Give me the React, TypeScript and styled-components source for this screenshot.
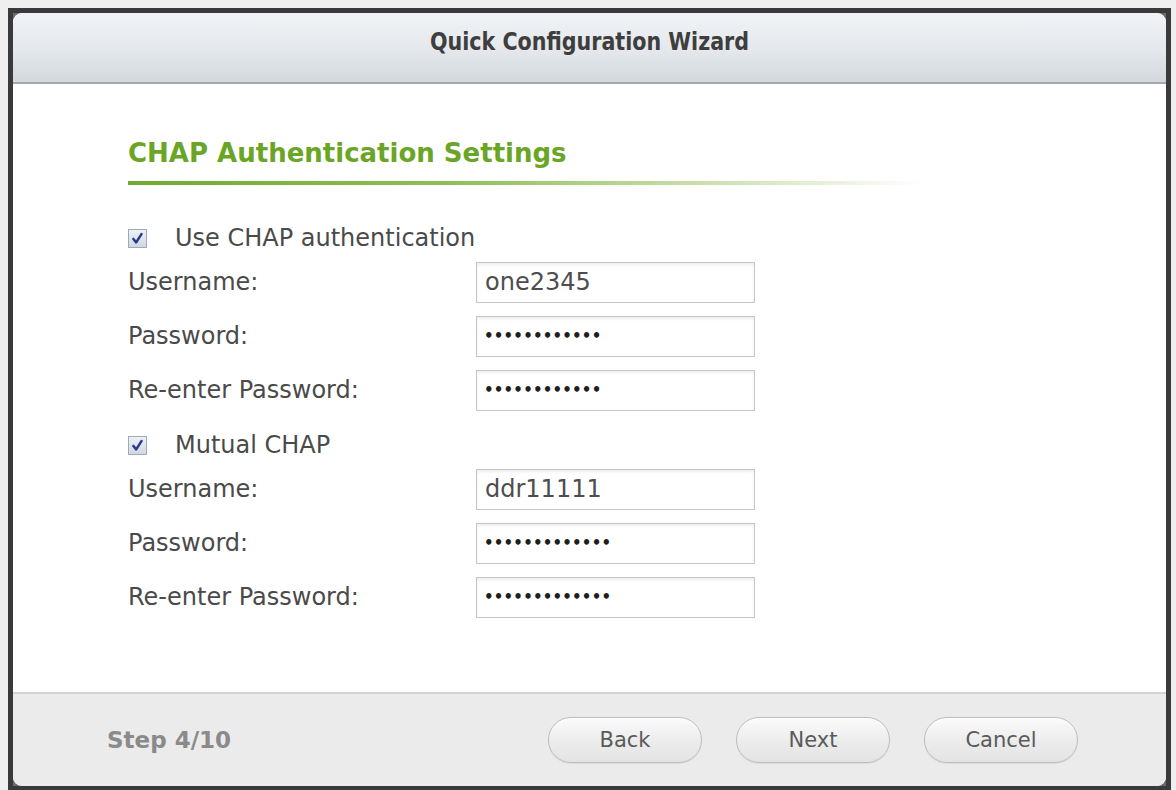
import React from 'react';
import styled, { createGlobalStyle } from 'styled-components';

interface Field {
  label: string;
  value: string;
  masked?: boolean;
}

interface Section {
  title: string;
  fields: Field[];
}

const sections: Section[] = [
  {
    title: 'Use CHAP authentication',
    fields: [
      { label: 'Username:', value: 'one2345' },
      { label: 'Password:', value: '••••••••••••', masked: true },
      { label: 'Re-enter Password:', value: '••••••••••••', masked: true },
    ],
  },
  {
    title: 'Mutual CHAP',
    fields: [
      { label: 'Username:', value: 'ddr11111' },
      { label: 'Password:', value: '•••••••••••••', masked: true },
      { label: 'Re-enter Password:', value: '•••••••••••••', masked: true },
    ],
  },
];

const GlobalStyle = createGlobalStyle`
  html, body {
    margin: 0;
    padding: 0;
    background: #efefef;
  }
  body {
    padding: 8px 5px 0 8px;
    font-family: "DejaVu Sans", Verdana, sans-serif;
  }
`;

const Window = styled.div`
  box-sizing: border-box;
  width: 1163px;
  height: 782px;
  border: 5px solid #3a3a3a;
  border-bottom-width: 4px;
  background: #6b6b6b;
`;

const Panel = styled.div`
  height: 100%;
  display: flex;
  flex-direction: column;
  border-radius: 9px;
  overflow: hidden;
  background: #ffffff;
`;

const TitleBar = styled.div`
  box-sizing: border-box;
  height: 71px;
  flex: none;
  display: flex;
  align-items: center;
  justify-content: center;
  background: linear-gradient(#f1f3f6, #e4e8ec 55%, #d3d8dd);
  border-bottom: 2px solid #a3a8ad;
  padding-bottom: 12px;
`;

/* narrow face is not installed, so the bold sans is squeezed */
const TitleText = styled.span`
  display: inline-block;
  transform: scaleX(0.86);
  font-weight: bold;
  font-size: 24px;
  color: #3e3e3e;
`;

const Body = styled.div`
  flex: 1;
  padding: 53px 0 0 115px;
`;

const Heading = styled.h2`
  margin: 0;
  font-size: 26px;
  line-height: 32px;
  font-weight: bold;
  color: #6aa526;
`;

const Rule = styled.div`
  width: 795px;
  height: 4px;
  margin-top: 12px;
  background: linear-gradient(90deg, #6fab2c 0%, #8fbe56 40%, #c4dda5 70%, rgba(255, 255, 255, 0) 100%);
`;

const Form = styled.div`
  margin-top: 37px;
  display: flex;
  flex-direction: column;
  gap: 19px;
`;

const Group = styled.div`
  display: flex;
  flex-direction: column;
`;

const CheckRow = styled.label`
  height: 32px;
  margin-bottom: 8px;
  display: flex;
  align-items: center;
  gap: 28px;
  font-size: 24px;
  color: #4a4a4a;
`;

const CheckBox = styled.span`
  box-sizing: border-box;
  width: 19px;
  height: 19px;
  display: flex;
  align-items: center;
  justify-content: center;
  border: 1px solid #9eaab8;
  background: linear-gradient(#eef2f7, #cfd8e3);
`;

const FieldList = styled.div`
  display: flex;
  flex-direction: column;
  gap: 14px;
`;

const FieldRow = styled.div`
  height: 40px;
  display: flex;
  align-items: center;
`;

const Label = styled.span`
  width: 348px;
  font-size: 24px;
  color: #4a4a4a;
`;

const TextBox = styled.input<{ $masked?: boolean }>`
  box-sizing: border-box;
  width: 279px;
  height: 41px;
  margin: 0;
  padding: 0 0 0 ${(p) => (p.$masked ? '7px' : '8px')};
  border: 1px solid #c6c6c6;
  box-shadow: inset 0 2px 3px rgba(0, 0, 0, 0.07);
  background: #ffffff;
  outline: none;
  font-family: "DejaVu Sans", Verdana, sans-serif;
  font-weight: ${(p) => (p.$masked ? 'bold' : 'normal')};
  font-size: ${(p) => (p.$masked ? '15px' : '24px')};
  letter-spacing: ${(p) => (p.$masked ? '0.2px' : '0')};
  color: ${(p) => (p.$masked ? '#1e1e1e' : '#4d4d4d')};
`;

const Footer = styled.div`
  box-sizing: border-box;
  height: 94px;
  flex: none;
  display: flex;
  align-items: center;
  padding: 0 88px 0 94px;
  border-top: 2px solid #d2d2d2;
  background: #ebebeb;
`;

const Step = styled.span`
  flex: 1;
  font-weight: bold;
  font-size: 23px;
  color: #8a8a8a;
`;

const Buttons = styled.div`
  display: flex;
  gap: 34px;
`;

const Button = styled.button`
  box-sizing: border-box;
  width: 154px;
  height: 46px;
  border-radius: 23px;
  border: 1px solid #bcbcbc;
  background: linear-gradient(#fbfbfb, #ededed 50%, #e3e3e3);
  box-shadow: inset 0 1px 0 #ffffff, 0 1px 1px rgba(0, 0, 0, 0.06);
  font-family: "DejaVu Sans", Verdana, sans-serif;
  font-size: 21px;
  color: #5a5a5a;
  cursor: pointer;
`;

const Tick: React.FC = () => (
  <svg width="13" height="13" viewBox="0 0 12 12">
    <path d="M2.2 6.4 L4.8 9.6 L9.8 1.8" fill="none" stroke="#2c3a8a" strokeWidth="2.3" strokeLinecap="round" strokeLinejoin="round" />
  </svg>
);

const App: React.FC = () => (
  <>
    <GlobalStyle />
    <Window>
      <Panel>
        <TitleBar>
          <TitleText>Quick Configuration Wizard</TitleText>
        </TitleBar>
        <Body>
          <Heading>CHAP Authentication Settings</Heading>
          <Rule />
          <Form>
            {sections.map((section) => (
              <Group key={section.title}>
                <CheckRow>
                  <CheckBox><Tick /></CheckBox>
                  {section.title}
                </CheckRow>
                <FieldList>
                  {section.fields.map((field) => (
                    <FieldRow key={field.label}>
                      <Label>{field.label}</Label>
                      <TextBox readOnly value={field.value} $masked={field.masked} />
                    </FieldRow>
                  ))}
                </FieldList>
              </Group>
            ))}
          </Form>
        </Body>
        <Footer>
          <Step>Step 4/10</Step>
          <Buttons>
            <Button>Back</Button>
            <Button>Next</Button>
            <Button>Cancel</Button>
          </Buttons>
        </Footer>
      </Panel>
    </Window>
  </>
);

export default App;
